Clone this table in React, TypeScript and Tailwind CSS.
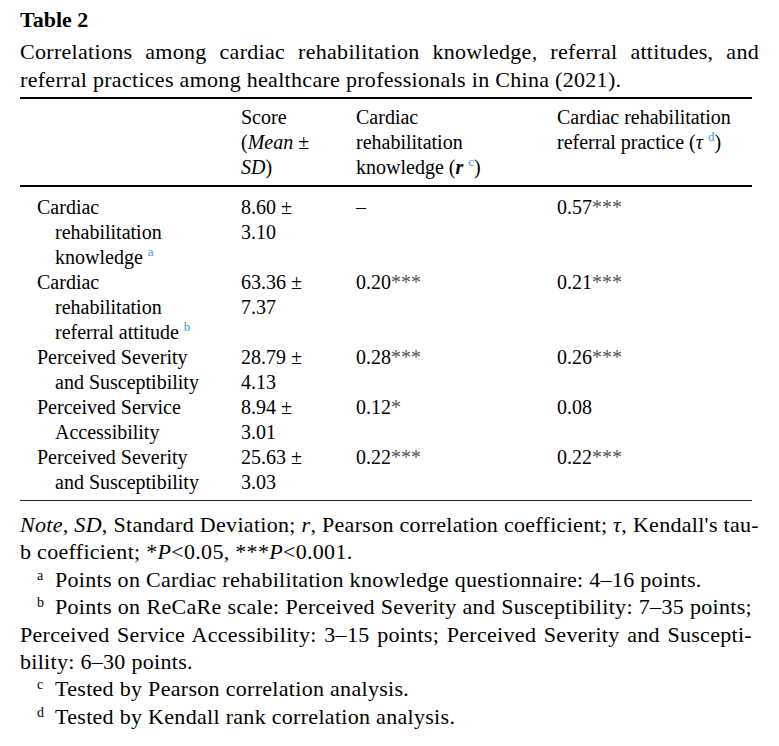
const serif = { fontFamily: '"Liberation Serif", "Times New Roman", serif' }

const Sup = ({ children }: { children: React.ReactNode }) => (
    <span className="relative -top-[8px] text-[13px] leading-none text-[#3b9ad4] ml-[5px]">{children}</span>
)

const Mark = ({ children }: { children: React.ReactNode }) => (
    <span className="relative -top-[7px] text-[14px] leading-none inline-block w-[18px] text-left">{children}</span>
)

const Stars = ({ n }: { n: number }) => <span className="text-[#555]">{"*".repeat(n)}</span>

type Row = {
    label: string[]
    note?: string
    score: [string, string]
    r: React.ReactNode
    tau: React.ReactNode
}

const rows: Row[] = [
    {
        label: ["Cardiac", "rehabilitation", "knowledge"],
        note: "a",
        score: ["8.60 ±", "3.10"],
        r: "–",
        tau: <>0.57<Stars n={3} /></>
    },
    {
        label: ["Cardiac", "rehabilitation", "referral attitude"],
        note: "b",
        score: ["63.36 ±", "7.37"],
        r: <>0.20<Stars n={3} /></>,
        tau: <>0.21<Stars n={3} /></>
    },
    {
        label: ["Perceived Severity", "and Susceptibility"],
        score: ["28.79 ±", "4.13"],
        r: <>0.28<Stars n={3} /></>,
        tau: <>0.26<Stars n={3} /></>
    },
    {
        label: ["Perceived Service", "Accessibility"],
        score: ["8.94 ±", "3.01"],
        r: <>0.12<Stars n={1} /></>,
        tau: "0.08"
    },
    {
        label: ["Perceived Severity", "and Susceptibility"],
        score: ["25.63 ±", "3.03"],
        r: <>0.22<Stars n={3} /></>,
        tau: <>0.22<Stars n={3} /></>
    }
]

const cols = "grid grid-cols-[221px_115px_201px_195px]"

export default function App() {
    return (
        <div className="w-[779px] h-[746px] bg-white text-black px-[20px] pt-[6px]" style={serif}>
            {/* Caption */}
            <div className="text-[22px] leading-[28px] font-bold">Table 2</div>
            <div className="mt-[4px] text-[22px] leading-[28px] tracking-[0.3px]">
                <div className="whitespace-nowrap text-justify [text-align-last:justify]">
                    Correlations among cardiac rehabilitation knowledge, referral attitudes, and
                </div>
                <div className="whitespace-nowrap">
                    referral practices among healthcare professionals in China (2021).
                </div>
            </div>

            {/* Table */}
            <div className="mt-[3px] w-[732px] border-t-2 border-black">
                <div className={`${cols} pt-[6px] pb-[5px] border-b-2 border-black text-[20px] leading-[25px]`}>
                    <div />
                    <div>
                        <div>Score</div>
                        <div>(<i>Mean</i> ±</div>
                        <div><i>SD</i>)</div>
                    </div>
                    <div>
                        <div>Cardiac</div>
                        <div>rehabilitation</div>
                        <div>knowledge (<i className="font-bold">r</i><Sup>c</Sup>)</div>
                    </div>
                    <div>
                        <div>Cardiac rehabilitation</div>
                        <div>referral practice (<i>τ</i><Sup>d</Sup>)</div>
                    </div>
                </div>

                <div className="pt-[8px] pb-[5px] border-b-[1.5px] border-[#222] text-[20px] leading-[25px]">
                    {rows.map((row, i) => (
                        <div key={i} className={cols}>
                            <div className="pl-[17px]">
                                {row.label.map((line, j) => (
                                    <div key={j} className={j > 0 ? "pl-[18px]" : ""}>
                                        {line}
                                        {row.note && j === row.label.length - 1 && <Sup>{row.note}</Sup>}
                                    </div>
                                ))}
                            </div>
                            <div>
                                <div>{row.score[0]}</div>
                                <div>{row.score[1]}</div>
                            </div>
                            <div>{row.r}</div>
                            <div>{row.tau}</div>
                        </div>
                    ))}
                </div>
            </div>

            {/* Notes */}
            <div className="w-[732px] pt-[10px] text-[22px] leading-[27.4px] tracking-[0.3px]">
                <div className="whitespace-nowrap text-justify [text-align-last:justify]">
                    <i>Note, SD</i>, Standard Deviation; <i>r</i>, Pearson correlation coefficient; <i>τ</i>, Kendall's tau-
                </div>
                <div className="whitespace-nowrap">
                    b coefficient; *<i>P</i>&lt;0.05, ***<i>P</i>&lt;0.001.
                </div>
                <div className="whitespace-nowrap pl-[17px]">
                    <Mark>a</Mark>Points on Cardiac rehabilitation knowledge questionnaire: 4–16 points.
                </div>
                <div className="whitespace-nowrap pl-[17px] text-justify [text-align-last:justify]">
                    <Mark>b</Mark>Points on ReCaRe scale: Perceived Severity and Susceptibility: 7–35 points;
                </div>
                <div className="whitespace-nowrap text-justify [text-align-last:justify]">
                    Perceived Service Accessibility: 3–15 points; Perceived Severity and Suscepti-
                </div>
                <div className="whitespace-nowrap">bility: 6–30 points.</div>
                <div className="whitespace-nowrap pl-[17px]">
                    <Mark>c</Mark>Tested by Pearson correlation analysis.
                </div>
                <div className="whitespace-nowrap pl-[17px]">
                    <Mark>d</Mark>Tested by Kendall rank correlation analysis.
                </div>
            </div>
        </div>
    )
}
